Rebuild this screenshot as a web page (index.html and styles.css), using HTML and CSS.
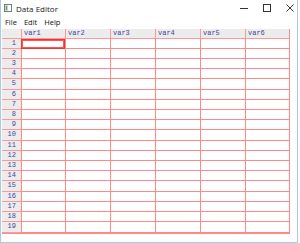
FILE: index.html
```html
<!DOCTYPE html>
<html lang="en">
<head>
  <meta charset="UTF-8" />
  <title>Data Editor</title>
  <link rel="stylesheet" href="styles.css">
</head>
<body>
  <div class="window">
    <div class="titlebar">
      <svg class="app-icon" width="8" height="8" viewBox="0 0 8 8">
        <rect x="0.5" y="0.5" width="7" height="7" fill="#fff" stroke="#6d7f8c"/>
        <rect x="1.5" y="1.5" width="2" height="5" fill="#7aa35a"/>
      </svg>
      <span class="title">Data Editor</span>
      <div class="controls">
        <svg width="8" height="8" viewBox="0 0 8 8"><line x1="0" y1="4.5" x2="8" y2="4.5" stroke="#333" stroke-width="1"/></svg>
        <svg width="8" height="8" viewBox="0 0 8 8"><rect x="0.5" y="0.5" width="7" height="7" fill="none" stroke="#333" stroke-width="1"/></svg>
        <svg width="8" height="8" viewBox="0 0 8 8"><path d="M0.5 0.5 L7.5 7.5 M7.5 0.5 L0.5 7.5" stroke="#333" stroke-width="1"/></svg>
      </div>
    </div>
    <div class="menubar">
      <span>File</span>
      <span>Edit</span>
      <span>Help</span>
    </div>
    <div class="sheet">
      <div class="grid" id="grid"></div>
    </div>
  </div>

  <script>
    const grid = document.getElementById('grid');
    let html = '<div class="corner"></div>';
    for (let c = 1; c <= 6; c++) {
      html += `<div class="colhead">var${c}</div>`;
    }
    for (let r = 1; r <= 19; r++) {
      html += `<div class="rowhead">${r}</div>`;
      for (let c = 1; c <= 6; c++) {
        const sel = (r === 1 && c === 1) ? ' selected' : '';
        html += `<div class="cell${sel}"></div>`;
      }
    }
    grid.innerHTML = html;
  </script>
</body>
</html>
```

FILE: styles.css
```css
body {
  margin: 0;
  padding: 0;
  background: #fff;
  font-family: "Open Sans", "Liberation Sans", sans-serif;
}
.window {
  width: 296px;
  height: 242px;
  border-left: 1px solid #a9cbe9;
  border-right: 1px solid #a9cbe9;
  border-bottom: 1px solid #a9cbe9;
  background: #fff;
  overflow: hidden;
}
.titlebar {
  height: 16px;
  display: flex;
  align-items: center;
  padding-left: 3px;
}
.app-icon {
  margin-right: 4px;
}
.title {
  font-size: 8px;
  color: #222;
}
.controls {
  margin-left: auto;
  display: flex;
  gap: 15px;
  padding-right: 3px;
}
.menubar {
  height: 11px;
  display: flex;
  align-items: center;
  gap: 7px;
  padding-left: 4px;
  font-size: 7.5px;
  color: #111;
}
.sheet {
  padding: 2px 0 0 1px;
}
.grid {
  display: grid;
  grid-template-columns: 19px 44px 45px 45px 45px 45px 44px;
  grid-template-rows: 10px repeat(3, 10px 10px 10px 10px 11px) 10px 10px 10px 11px;
  width: 287px;
  border-right: 1px solid #f88;
  border-bottom: 1px solid #f88;
}
.corner, .colhead {
  background: #ececec;
  border-bottom: 1px solid #f99;
}
.colhead {
  border-left: 1px solid #f99;
  font-family: "Liberation Mono", monospace;
  font-size: 7px;
  line-height: 9px;
  color: #44449a;
  padding-left: 2px;
}
.rowhead {
  background: #ececec;
  border-bottom: 1px solid #f99;
  font-family: "Liberation Mono", monospace;
  font-size: 7px;
  line-height: 9px;
  color: #44449a;
  text-align: right;
  padding-right: 5px;
}
.cell {
  border-left: 1px solid #f88;
  border-bottom: 1px solid #f88;
}
.cell.selected {
  border: 1px solid #e33;
  box-shadow: inset 0 0 0 1px #f55;
}
```
